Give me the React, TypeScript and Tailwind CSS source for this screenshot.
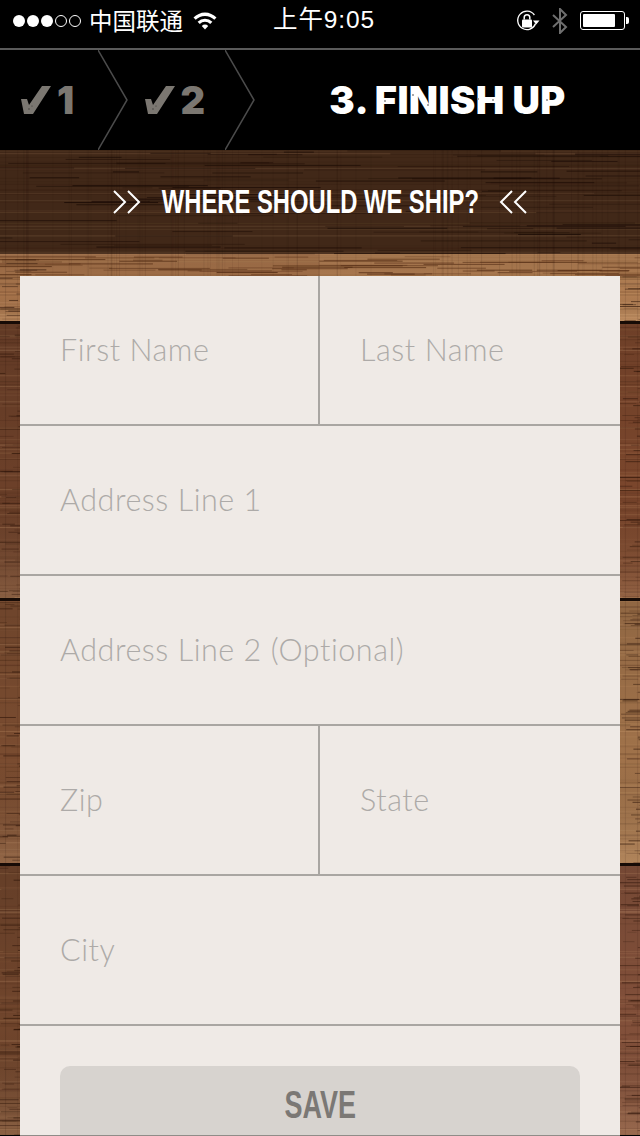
const SANS = "font-['Lato','Noto_Sans',sans-serif]";
const NARROW = "font-['Liberation_Sans',sans-serif]";
const BLACK = "font-['Inter','Lato',sans-serif]";

// small seeded generator so the wood grain stays the same on every render
function makeRandom(seed: number) {
  let s = seed;
  return () => {
    s = (s * 16807) % 2147483647;
    return s / 2147483647;
  };
}

const PLANKS = [
  { y: 104, h: 69, left: "#a5724a", right: "#b07d52" },
  { y: 173, h: 277, left: "#6c4029", right: "#7a462c" },
  { y: 450, h: 265, left: "#7a4c30", right: "#a0724a" },
  { y: 715, h: 271, left: "#70452c", right: "#82503a" },
];
const SEAMS = [173, 450, 715];

function WoodBackground() {
  const random = makeRandom(4711);
  const bandCracks = Array.from({ length: 110 }, () => ({
    x: random() * 680 - 40,
    y: random() * 104,
    w: 20 + random() * 170,
    o: 0.2 + random() * 0.6,
  }));
  const plankCracks = Array.from({ length: 420 }, () => ({
    x: random() < 0.5 ? random() * 24 - 4 : 616 + random() * 24,
    y: 104 + random() * 882,
    w: 8 + random() * 26,
    o: 0.12 + random() * 0.5,
  }));
  const topCracks = Array.from({ length: 70 }, () => ({
    x: random() * 680 - 40,
    y: 106 + random() * 20,
    w: 20 + random() * 110,
    o: 0.25 + random() * 0.5,
  }));
  const fibres = Array.from({ length: 260 }, () => ({
    y: random() * 986,
    o: 0.04 + random() * 0.14,
    light: random() > 0.5,
  }));
  const weave = Array.from({ length: 90 }, () => ({
    x: random() * 640,
    o: 0.03 + random() * 0.08,
  }));

  return (
    <svg className="absolute inset-0" width="640" height="986" viewBox="0 0 640 986">
      <defs>
        <linearGradient id="fade" x1="0" y1="0" x2="0" y2="1">
          <stop offset="0" stopColor="#000" stopOpacity="0.1" />
          <stop offset="0.6" stopColor="#000" stopOpacity="0" />
          <stop offset="1" stopColor="#ffd9a8" stopOpacity="0.2" />
        </linearGradient>
      </defs>
      <rect width="640" height="104" fill="#412818" />
      {PLANKS.map((p) => (
        <g key={p.y}>
          <rect x="0" y={p.y} width="320" height={p.h} fill={p.left} />
          <rect x="320" y={p.y} width="320" height={p.h} fill={p.right} />
          <rect x="0" y={p.y} width="640" height={p.h} fill="url(#fade)" />
        </g>
      ))}
      {fibres.map((f, i) => (
        <rect key={i} x="0" y={f.y} width="640" height="1" fill={f.light ? "#e8bd8e" : "#2a140a"} opacity={f.o} />
      ))}
      {weave.map((f, i) => (
        <rect key={i} x={f.x} y="0" width="1" height="986" fill="#1e0e06" opacity={f.o} />
      ))}
      {bandCracks.map((c, i) => (
        <rect key={i} x={c.x} y={c.y} width={c.w} height="1" fill="#1a0b05" opacity={c.o} />
      ))}
      {topCracks.map((c, i) => (
        <rect key={i} x={c.x} y={c.y} width={c.w} height="1" fill="#4e2710" opacity={c.o} />
      ))}
      {plankCracks.map((c, i) => (
        <rect key={i} x={c.x} y={c.y} width={c.w} height="1" fill="#2a1207" opacity={c.o} />
      ))}
      {SEAMS.map((y) => (
        <rect key={y} x="0" y={y - 2} width="640" height="3" fill="#170b06" />
      ))}
      <rect x="0" y="985" width="640" height="1" fill="#000" />
    </svg>
  );
}

function Check() {
  return (
    <svg width="30" height="28" viewBox="0 0 30 28" className="shrink-0">
      <path d="M0 13 L6 13 L8 19 L21 0 L30 0 L12 28 L3 28 Z" fill="#7b7771" />
      <circle cx="8" cy="23" r="0.7" fill="#3a3835" />
      <circle cx="11" cy="20" r="0.6" fill="#3a3835" />
    </svg>
  );
}

function Chevron() {
  return (
    <svg width="30" height="100" viewBox="0 0 30 100" className="shrink-0">
      <path d="M0 0 L29 50 L0 100" fill="none" stroke="#4b4b4b" strokeWidth="1.5" />
    </svg>
  );
}

function Step({ n, indent }: { n: number; indent: string }) {
  return (
    <div className={`flex h-full w-[127.5px] shrink-0 items-center ${indent}`}>
      <div className="flex flex-1 items-center gap-[6px]">
        <Check />
        <span className={`${BLACK} text-[38px] leading-none font-black text-[#7b7771]`}>{n}</span>
      </div>
      <Chevron />
    </div>
  );
}

function StatusBar() {
  return (
    <div className="flex h-[48px] items-center bg-black pb-[7px] text-white">
      <div className="flex w-[273px] items-center pl-[13px]">
        <div className="flex w-[76px] gap-[2px]">
          {[0, 1, 2].map((i) => (
            <span key={i} className="h-[12px] w-[12px] rounded-full bg-white" />
          ))}
          {[3, 4].map((i) => (
            <span key={i} className="h-[12px] w-[12px] rounded-full border border-white" />
          ))}
        </div>
        <span className="font-['Noto_Sans_CJK_SC',sans-serif] text-[23.5px] leading-none">中国联通</span>
        <svg width="24" height="20" viewBox="0 0 24 20" className="ml-[10px]">
          <path d="M0.5 6.5 A16 16 0 0 1 23.5 6.5 L21.3 8.8 A13 13 0 0 0 2.7 8.8 Z" fill="#fff" />
          <path d="M4.6 10.7 A10.5 10.5 0 0 1 19.4 10.7 L17.2 13 A7.4 7.4 0 0 0 6.8 13 Z" fill="#fff" />
          <path d="M8.8 14.9 A4.6 4.6 0 0 1 15.2 14.9 L12 18.5 Z" fill="#fff" />
        </svg>
      </div>
      <span className="font-['Liberation_Sans','Noto_Sans_CJK_SC',sans-serif] text-[24.5px] leading-none tracking-[0.9px]">
        上午9:05
      </span>
      <div className="ml-auto flex items-center pr-[11px]">
        <svg width="24" height="22" viewBox="0 0 24 22">
          <path d="M19.6 13.5 A9.2 9.2 0 1 1 18.4 5" fill="none" stroke="#fff" strokeWidth="1.3" />
          <path d="M17 10.5 L23.5 10.5 L20.2 14.5 Z" fill="#fff" />
          <rect x="6" y="9.5" width="10" height="8" rx="1" fill="#fff" />
          <path d="M8.2 9.5 V7.5 A2.8 2.8 0 0 1 13.8 7.5 V9.5" fill="none" stroke="#fff" strokeWidth="1.5" />
        </svg>
        <svg width="16" height="26" viewBox="0 0 16 26" className="ml-[12px]">
          <path d="M1 7 L14 19 L8 25 V1 L14 7 L1 19" fill="none" stroke="#6f6f6f" strokeWidth="2" />
        </svg>
        <div className="ml-[12px] flex items-center">
          <div className="h-[19px] w-[45px] rounded-[3px] border border-white p-[2px] pr-[9px]">
            <div className="h-full rounded-[1px] bg-white" />
          </div>
          <div className="ml-px h-[7px] w-[3px] rounded-r-[2px] bg-white" />
        </div>
      </div>
    </div>
  );
}

function ShipArrows({ flip }: { flip?: boolean }) {
  return (
    <svg width="28" height="24" viewBox="0 0 28 24" className={flip ? "shrink-0 -scale-x-100" : "shrink-0"}>
      <path d="M1 1 L12 12 L1 23 M15 1 L26 12 L15 23" fill="none" stroke="#fff" strokeWidth="2" />
    </svg>
  );
}

function Field({ label, half }: { label: string; half?: boolean }) {
  return (
    <div
      className={`flex h-full items-center pb-[2px] pl-[40px] ${
        half ? "w-[300px] first:border-r-2 first:border-[#a9a6a2]" : "w-full"
      }`}
    >
      <span className={`${SANS} text-[30.5px] leading-none font-light tracking-[0.55px] text-[#adaaa8]`}>{label}</span>
    </div>
  );
}

function Row({ children }: { children: React.ReactNode }) {
  return <div className="flex h-[150px] shrink-0 border-b-2 border-[#a9a6a2]">{children}</div>;
}

export default function App() {
  return (
    <div className="flex h-[1136px] w-[640px] flex-col overflow-hidden bg-black">
      <StatusBar />
      <div className="h-[2px] bg-[#5a5a5a]" />
      <div className="flex h-[100px] items-center bg-black">
        <Step n={1} indent="pl-[21px]" />
        <Step n={2} indent="pl-[17px]" />
        <div className="flex flex-1 justify-center">
          <span className={`${BLACK} relative text-[38px] leading-none font-black tracking-[0.4px] text-white`}>
            3. FINISH UP
            {/* worn print specks on the heading */}
            <svg className="absolute inset-0" width="236" height="38" viewBox="0 0 236 38">
              {[
                [84, 14],
                [99, 24],
                [149, 18],
                [164, 19],
                [218, 19],
                [56, 20],
              ].map(([x, y]) => (
                <circle key={x} cx={x} cy={y} r="1" fill="#8b8b8b" />
              ))}
            </svg>
          </span>
        </div>
      </div>
      <div className="relative flex h-[986px] flex-col">
        <WoodBackground />
        <div className="relative flex h-[104px] shrink-0 items-center justify-center gap-[21px] text-white">
          <ShipArrows />
          <div className="flex w-[316px] justify-center">
            <span className={`${NARROW} shrink-0 scale-x-[0.71] text-[33.5px] leading-none font-bold whitespace-nowrap`}>
              WHERE SHOULD WE SHIP?
            </span>
          </div>
          <ShipArrows flip />
        </div>
        <div className="relative mx-[20px] mt-[22px] flex h-[860px] flex-col overflow-hidden border-b border-[#8f8c88] bg-[#efeae6]">
          <Row>
            <Field label="First Name" half />
            <Field label="Last Name" half />
          </Row>
          <Row>
            <Field label="Address Line 1" />
          </Row>
          <Row>
            <Field label="Address Line 2 (Optional)" />
          </Row>
          <Row>
            <Field label="Zip" half />
            <Field label="State" half />
          </Row>
          <Row>
            <Field label="City" />
          </Row>
          <div className="px-[40px] pt-[40px]">
            <div className="flex h-[78px] items-center justify-center rounded-[10px] bg-[#d7d3cf]">
              <span className={`${NARROW} shrink-0 scale-x-[0.71] text-[38px] leading-none font-bold text-[#7b7875]`}>
                SAVE
              </span>
            </div>
          </div>
        </div>
      </div>
    </div>
  );
}
